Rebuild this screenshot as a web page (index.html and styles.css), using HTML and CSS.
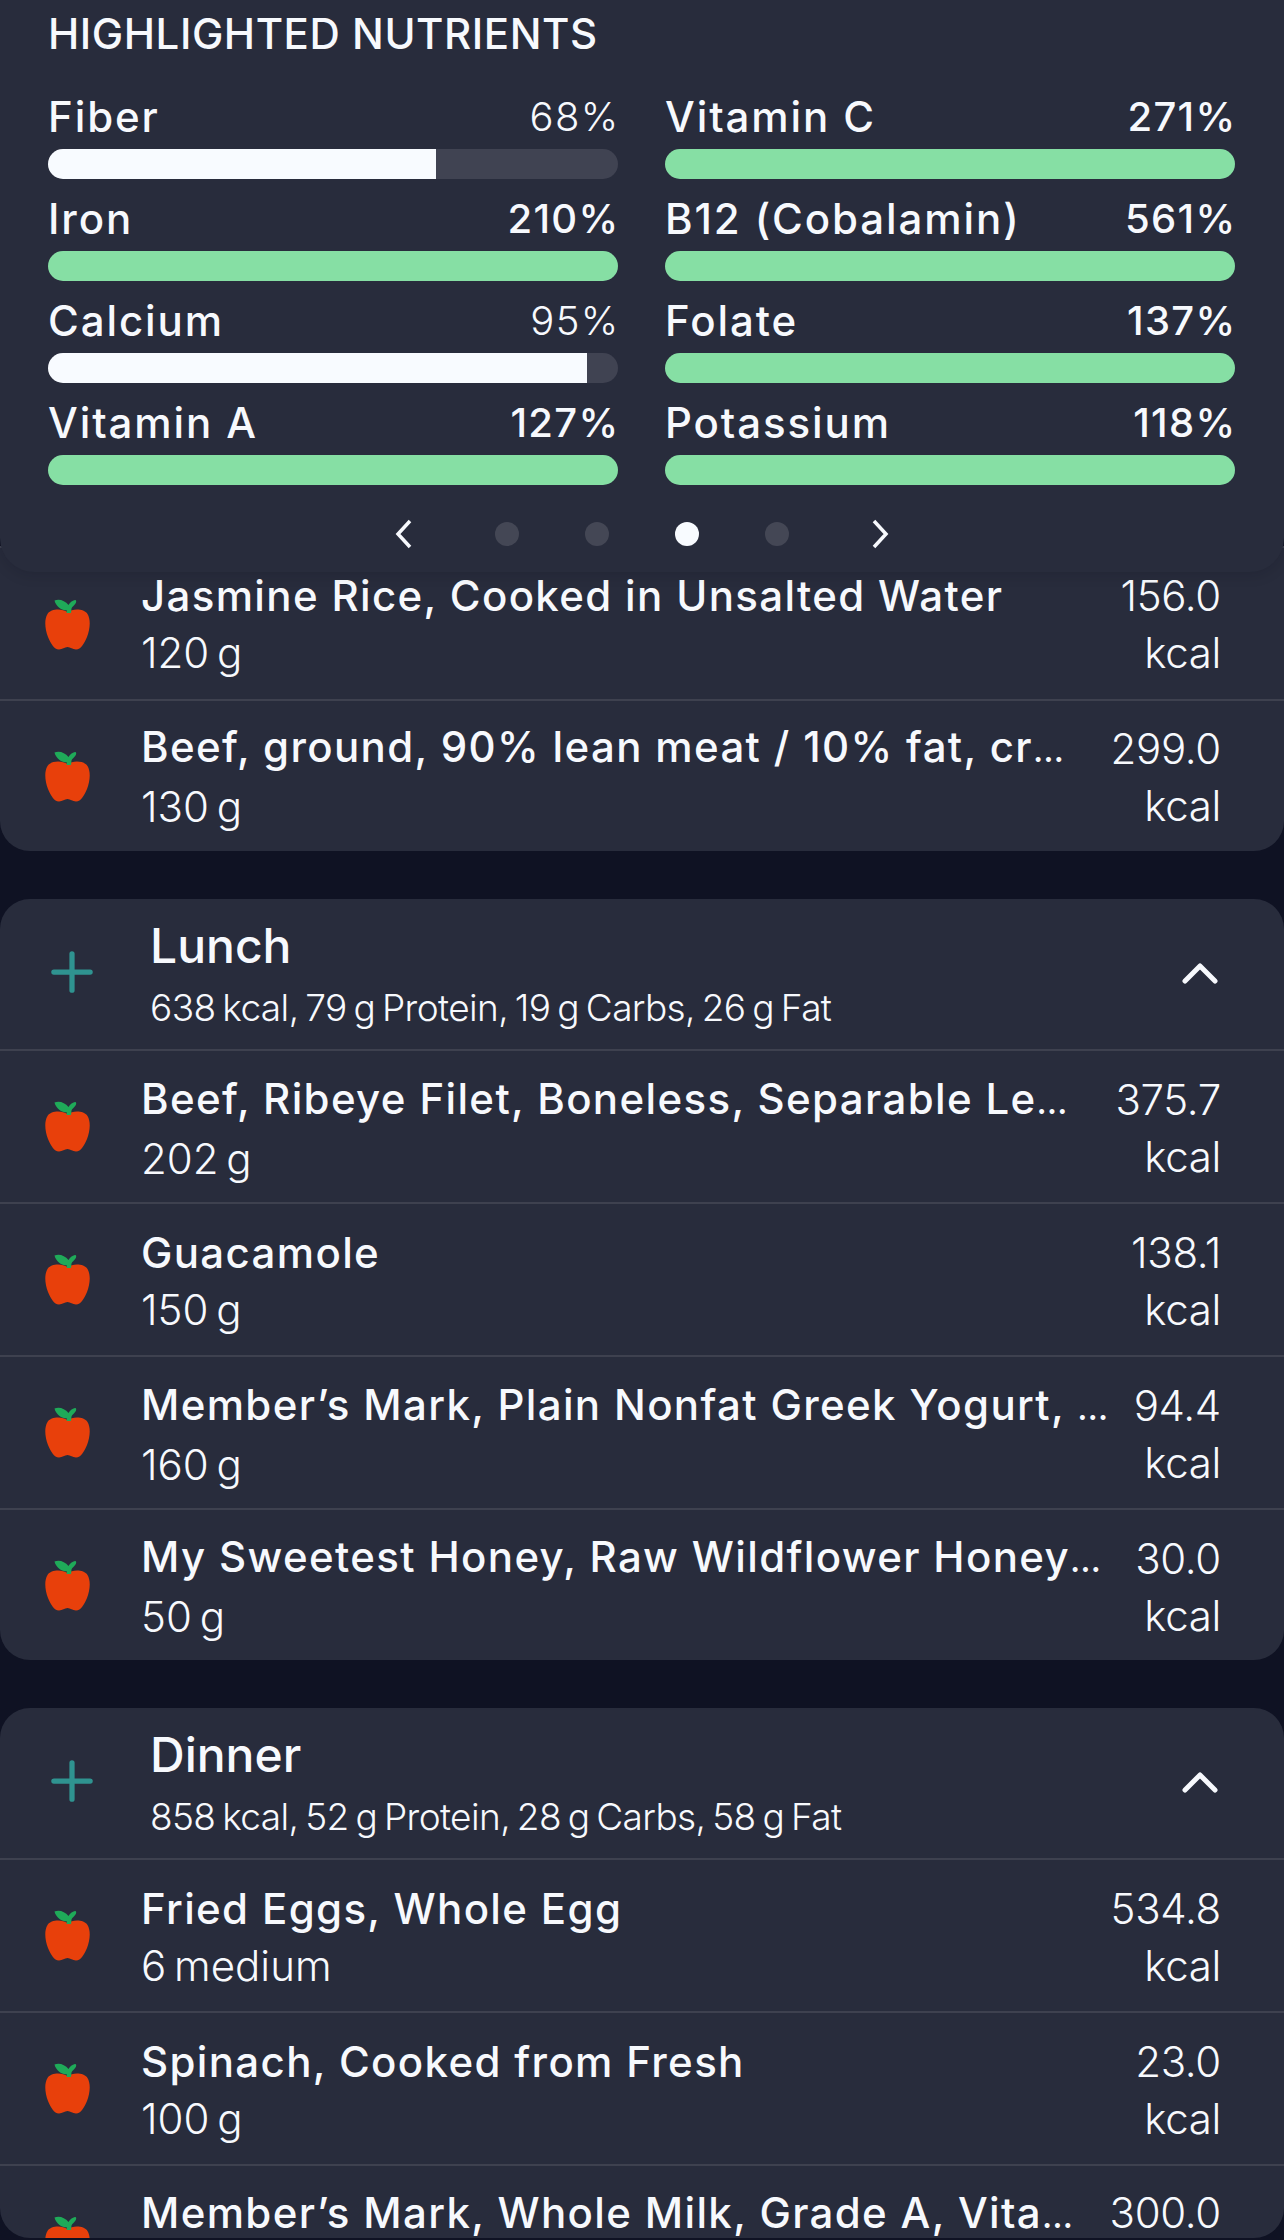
FILE: index.html
```html
<!DOCTYPE html>
<html lang="en">
<head>
<meta charset="utf-8">
<title>Diary</title>
<link rel="stylesheet" href="styles.css">
</head>
<body>
<svg class="defs" width="0" height="0" aria-hidden="true">
  <defs>
    <symbol id="apple" viewBox="0 0 45 51">
      <path fill="#e8400b" d="M22.500 13C17 9.500 6 9.500 2.500 15C-1 21 0 30 3 38C5.500 44 9 50.500 14 50.500C17.500 50.500 19.500 48 22.500 48C25.500 48 27.500 50.500 31 50.500C36 50.500 39.500 44 42 38C45 30 46 21 42.500 15C39 9.500 28 9.500 22.500 13Z"/>
      <path fill="#1faa59" d="M9.500 1.500C14 -.5 20 1.500 23.500 6C25 3.500 27 1.500 30 1C31.500 1 31.500 3 30.500 4.500C29 6.500 27 8 26.500 9.500L26 14L21.500 14L22 11.500C16.500 11.500 11 7.500 9.500 1.500Z"/>
    </symbol>
    <symbol id="plus" viewBox="0 0 44 44">
      <path fill="none" stroke="#2f9390" stroke-width="5.500" stroke-linecap="round" d="M22 3V41M3 22H41"/>
    </symbol>
    <symbol id="up" viewBox="0 0 36 22">
      <path fill="none" stroke="#f7f9fd" stroke-width="5" stroke-linecap="round" stroke-linejoin="round" d="M3 19L18 4L33 19"/>
    </symbol>
  </defs>
</svg>
<main class="screen">
  <section class="panel">
    <h2 class="panel-title">HIGHLIGHTED NUTRIENTS</h2>
    <div class="nutrients">
      <div class="nutrient"><div class="n-top"><span class="n-name">Fiber</span><span class="n-val">68%</span></div><div class="track"><div class="fill" style="width:68%"></div></div></div>
      <div class="nutrient"><div class="n-top"><span class="n-name">Vitamin C</span><span class="n-val over">271%</span></div><div class="track"><div class="fill full"></div></div></div>
      <div class="nutrient"><div class="n-top"><span class="n-name">Iron</span><span class="n-val over">210%</span></div><div class="track"><div class="fill full"></div></div></div>
      <div class="nutrient"><div class="n-top"><span class="n-name">B12 (Cobalamin)</span><span class="n-val over">561%</span></div><div class="track"><div class="fill full"></div></div></div>
      <div class="nutrient"><div class="n-top"><span class="n-name">Calcium</span><span class="n-val">95%</span></div><div class="track"><div class="fill" style="width:94.500%"></div></div></div>
      <div class="nutrient"><div class="n-top"><span class="n-name">Folate</span><span class="n-val over">137%</span></div><div class="track"><div class="fill full"></div></div></div>
      <div class="nutrient"><div class="n-top"><span class="n-name">Vitamin A</span><span class="n-val over">127%</span></div><div class="track"><div class="fill full"></div></div></div>
      <div class="nutrient"><div class="n-top"><span class="n-name">Potassium</span><span class="n-val over">118%</span></div><div class="track"><div class="fill full"></div></div></div>
    </div>
    <div class="pager">
      <svg class="arrow arrow-prev" viewBox="0 0 18 32"><path d="M15 3L3 16L15 29"/></svg>
      <span class="dot"></span><span class="dot"></span><span class="dot on"></span><span class="dot"></span>
      <svg class="arrow arrow-next" viewBox="0 0 18 32"><path d="M3 3L15 16L3 29"/></svg>
    </div>
  </section>

  <section class="card card-first">
    <div class="row"><svg class="apple"><use href="#apple"/></svg><div class="food"><div class="food-name">Jasmine Rice, Cooked in Unsalted Water</div><div class="food-sub">120 g</div></div><div class="kcal">156.0<br>kcal</div></div>
    <div class="row"><svg class="apple"><use href="#apple"/></svg><div class="food"><div class="food-name">Beef, ground, 90% lean meat / 10% fat, cr<span class="ell">…</span></div><div class="food-sub">130 g</div></div><div class="kcal">299.0<br>kcal</div></div>
  </section>

  <section class="card">
    <header class="head"><svg class="plus"><use href="#plus"/></svg><div class="head-text"><h3 class="meal">Lunch</h3><p class="macros">638 kcal, 79 g Protein, 19 g Carbs, 26 g Fat</p></div><svg class="up"><use href="#up"/></svg></header>
    <div class="row"><svg class="apple"><use href="#apple"/></svg><div class="food"><div class="food-name">Beef, Ribeye Filet, Boneless, Separable Le<span class="ell">…</span></div><div class="food-sub">202 g</div></div><div class="kcal">375.7<br>kcal</div></div>
    <div class="row"><svg class="apple"><use href="#apple"/></svg><div class="food"><div class="food-name">Guacamole</div><div class="food-sub">150 g</div></div><div class="kcal">138.1<br>kcal</div></div>
    <div class="row"><svg class="apple"><use href="#apple"/></svg><div class="food"><div class="food-name">Member’s Mark, Plain Nonfat Greek Yogurt, <span class="ell">…</span></div><div class="food-sub">160 g</div></div><div class="kcal">94.4<br>kcal</div></div>
    <div class="row"><svg class="apple"><use href="#apple"/></svg><div class="food"><div class="food-name">My Sweetest Honey, Raw Wildflower Honey<span class="ell">…</span></div><div class="food-sub">50 g</div></div><div class="kcal">30.0<br>kcal</div></div>
  </section>

  <section class="card">
    <header class="head"><svg class="plus"><use href="#plus"/></svg><div class="head-text"><h3 class="meal">Dinner</h3><p class="macros">858 kcal, 52 g Protein, 28 g Carbs, 58 g Fat</p></div><svg class="up"><use href="#up"/></svg></header>
    <div class="row"><svg class="apple"><use href="#apple"/></svg><div class="food"><div class="food-name">Fried Eggs, Whole Egg</div><div class="food-sub">6 medium</div></div><div class="kcal">534.8<br>kcal</div></div>
    <div class="row"><svg class="apple"><use href="#apple"/></svg><div class="food"><div class="food-name">Spinach, Cooked from Fresh</div><div class="food-sub">100 g</div></div><div class="kcal">23.0<br>kcal</div></div>
    <div class="row row-cut"><svg class="apple"><use href="#apple"/></svg><div class="food"><div class="food-name">Member’s Mark, Whole Milk, Grade A, Vita<span class="ell">…</span></div></div><div class="kcal">300.0</div></div>
  </section>
</main>
</body>
</html>
```

FILE: styles.css
```css
* { box-sizing: border-box; }
html, body { margin: 0; padding: 0; background: #0f1223; }
body { font-family: Inter, "Liberation Sans", sans-serif; color: #f7f9fd; }
.defs { position: absolute; }
.screen { height: 2240px; overflow: hidden; background: #0f1223; }

.panel {
  position: relative;
  z-index: 2;
  height: 572px;
  padding: 14px 48px 0;
  background: #282c3c;
  border-radius: 0 0 34px 34px;
  box-shadow: 0 3px 14px rgba(8, 10, 22, .14);
}
.panel-title { margin: 0; font-size: 42px; line-height: 40px; font-weight: 450; letter-spacing: .55px; }
.nutrients { display: grid; grid-template-columns: 570px 570px; column-gap: 47px; margin-top: 42px; }
.nutrient { height: 102px; }
.n-top { display: flex; justify-content: space-between; align-items: center; height: 40px; margin-bottom: 13px; }
.n-name { font-size: 42px; font-weight: 500; letter-spacing: 1.9px; }
.n-val { font-size: 40px; font-weight: 300; letter-spacing: 1.3px; margin-right: -1.500px; }
.n-val.over { font-weight: 500; }
.track { height: 30px; border-radius: 15px; background: #404352; overflow: hidden; }
.fill { height: 100%; background: #f8fbff; }
.fill.full { width: 100%; background: #86dfa4; }

.pager { display: flex; align-items: center; justify-content: center; gap: 66px; margin-top: 14px; }
.dot { width: 24px; height: 24px; border-radius: 50%; background: #444755; }
.dot.on { background: #f8fbff; }
.arrow { width: 18px; height: 32px; fill: none; stroke: #f7f9fd; stroke-width: 3.500; }
.arrow-prev { margin-right: 16px; }
.arrow-next { margin-left: 16px; }

.card { background: #282c3c; border-radius: 30px; margin-bottom: 48px; overflow: hidden; }
.card-first { margin-top: -26px; border-radius: 0 0 30px 30px; }

.head { display: flex; align-items: center; height: 150px; padding: 0 66px 5px 51px; }
.plus { width: 42px; height: 42px; flex: none; }
.head-text { flex: 1; margin: 5px 0 0 57px; }
.meal { margin: 0; font-size: 48px; line-height: 56px; font-weight: 500; }
.macros { margin: 12px 0 0; font-size: 37px; line-height: 44px; font-weight: 300; letter-spacing: -.6px; word-spacing: -3px; }
.up { width: 36px; height: 22px; flex: none; margin-top: 3px; }

.row { display: flex; align-items: center; height: 153px; padding: 3px 63px 0 45px; border-top: 2px solid #3e414f; }
.row:last-child { height: 152px; }
.card-first .row { padding-top: 1px; }
.apple { width: 45px; height: 51px; flex: none; margin-top: -3px; }
.card-first .apple { margin-top: 0; }
.food { flex: 1; min-width: 0; margin-left: 51px; }
.food-name { font-size: 42px; line-height: 57px; font-weight: 550; letter-spacing: 1.35px; white-space: nowrap; }
.ell { font-size: 34px; letter-spacing: 0; }
.food-sub { font-size: 42px; line-height: 57px; font-weight: 300; word-spacing: -4px; }
.kcal { flex: none; font-size: 42px; line-height: 57px; font-weight: 300; letter-spacing: -.3px; text-align: right; }

.row.row-cut { align-items: flex-start; height: 74px; padding-top: 25px; }
.row-cut .food-name, .row-cut .kcal { line-height: 44px; }
.row-cut .apple { margin-top: 25px; }
```
